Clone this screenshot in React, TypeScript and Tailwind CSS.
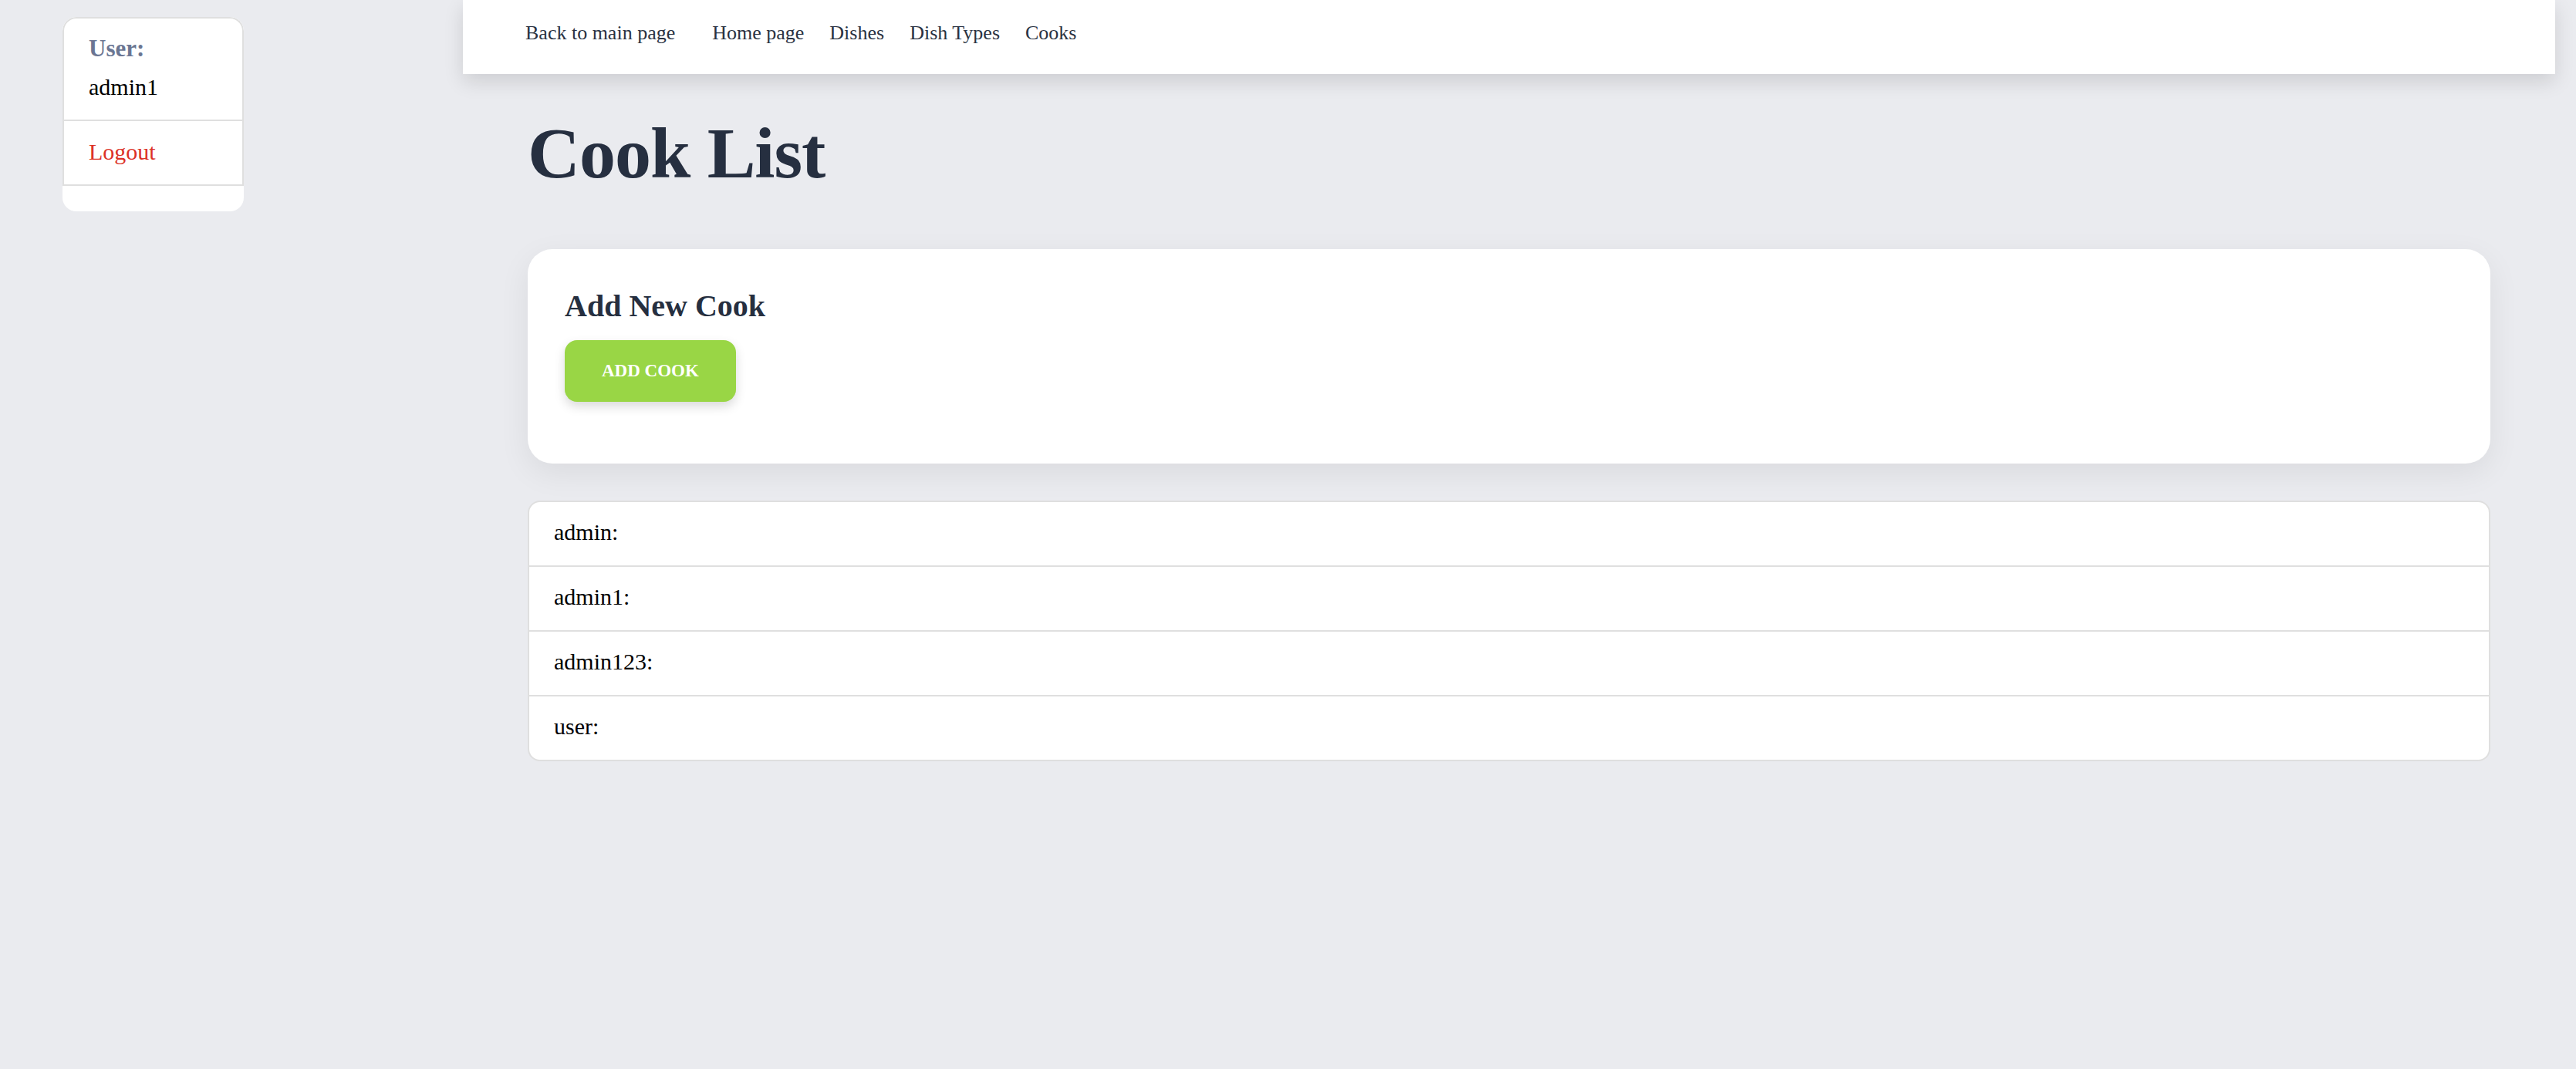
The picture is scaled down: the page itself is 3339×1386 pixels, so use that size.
const navLinks = ['Home page', 'Dishes', 'Dish Types', 'Cooks'];
const cooks = ['admin', 'admin1', 'admin123', 'user'];

function Sidebar() {
  return (
    <div className="w-[235px] bg-white rounded-[18px] pb-[33px] overflow-hidden">
      <ul className="border-2 border-b-0 border-[#dfdfdf] rounded-t-[18px]">
        <li className="px-[32px] pt-[15px] pb-[18px] border-b-2 border-[#dfdfdf]">
          <p className="text-[31px] leading-[48px] font-bold text-[#6b7693]">User:</p>
          <p className="mt-[2px] text-[30px] leading-[48px] text-black">admin1</p>
        </li>
        <li className="px-[32px] pt-[16px] pb-[18px] border-b-2 border-[#dfdfdf]">
          <a href="#" className="text-[30px] leading-[48px] text-[#dc3126]">
            Logout
          </a>
        </li>
      </ul>
    </div>
  );
}

function Navbar() {
  return (
    <nav className="h-[96px] bg-white shadow-[0_10px_24px_rgba(0,0,0,0.12)] pl-[81px] pt-[23px]">
      <div className="flex items-start gap-[33px] text-[26px] text-[#2a3242]">
        <a href="#" className="mr-[15px]">Back to main page</a>
        {navLinks.map((link) => (
          <a key={link} href="#">
            {link}
          </a>
        ))}
      </div>
    </nav>
  );
}

export default function App() {
  return (
    <div className="min-h-screen bg-[#eaebef] font-['Liberation_Serif',serif]">
      <div className="flex">
        <aside className="w-[600px] shrink-0 pl-[81px] pt-[22px]">
          <Sidebar />
        </aside>

        <main className="flex-1 pr-[27px]">
          <Navbar />

          <div className="px-[84px]">
            <h1 className="mt-[55px] text-[94px] leading-[94px] font-bold tracking-[-1px] text-[#262f40]">
              Cook List
            </h1>

            <section className="mt-[78px] bg-white rounded-[32px] px-[48px] pt-[48px] pb-[80px] shadow-[0_12px_40px_rgba(0,0,0,0.07)]">
              <h2 className="text-[40px] leading-[52px] font-bold text-[#262f40]">Add New Cook</h2>
              <button className="mt-[18px] h-[80px] px-[48px] rounded-[16px] bg-[#99d645] text-white text-[23px] font-bold shadow-[0_6px_14px_rgba(0,0,0,0.15)]">
                ADD COOK
              </button>
            </section>

            <ul className="mt-[48px] bg-white rounded-[16px] border-2 border-[#dfdfdf] overflow-hidden">
              {cooks.map((name, i) => (
                <li
                  key={name}
                  className={`px-[32px] pt-[15px] pb-[19px] text-[30px] leading-[48px] text-black ${
                    i > 0 ? 'border-t-2 border-[#dfdfdf]' : ''
                  }`}
                >
                  {name}:
                </li>
              ))}
            </ul>
          </div>
        </main>
      </div>
    </div>
  );
}
